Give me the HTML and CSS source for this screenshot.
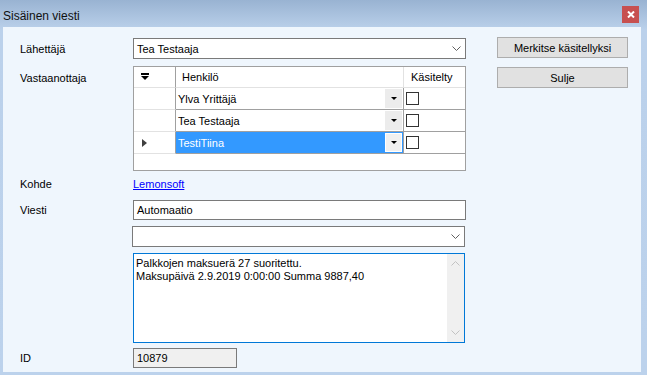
FILE: index.html
```html
<!DOCTYPE html>
<html lang="fi">
<head>
    <meta charset="UTF-8">
    <title>Sisäinen viesti</title>
    <link rel="stylesheet" href="styles.css">
</head>
<body>

<div class="window">
    <!-- Otsikkorivi -->
    <div class="titlebar">
        <span class="title">Sisäinen viesti</span>
        <button class="close">
            <svg width="8" height="7" viewBox="0 0 8 7"><path d="M1 0.5 L7 6.5 M7 0.5 L1 6.5" stroke="#fff" stroke-width="2"/></svg>
        </button>
    </div>

    <div class="client">
        <div class="form">
            <div class="row row-sender">
                <span class="lbl">Lähettäjä</span>
                <div class="combo">
                    <span>Tea Testaaja</span>
                    <svg class="chev" width="9" height="5" viewBox="0 0 9 5"><polyline points="0.5,0.5 4.5,4.5 8.5,0.5" fill="none" stroke="#606060"/></svg>
                </div>
            </div>

            <div class="row row-grid">
                <span class="lbl lbl-top">Vastaanottaja</span>
                <div class="dgrid">
                    <div class="dg-row dg-head">
                        <div class="rh">
                            <svg width="10" height="8" viewBox="0 0 10 8"><rect x="1" y="0" width="8" height="2" fill="#000"/><polygon points="1,3 9,3 5,7" fill="#000"/></svg>
                        </div>
                        <div class="c-name">Henkilö</div>
                        <div class="c-done">Käsitelty</div>
                    </div>
                    <div class="dg-row">
                        <div class="rh"></div>
                        <div class="c-name"><span>Ylva Yrittäjä</span><span class="dd"><i></i></span></div>
                        <div class="c-done"><span class="chk"></span></div>
                    </div>
                    <div class="dg-row">
                        <div class="rh"></div>
                        <div class="c-name"><span>Tea Testaaja</span><span class="dd"><i></i></span></div>
                        <div class="c-done"><span class="chk"></span></div>
                    </div>
                    <div class="dg-row current">
                        <div class="rh"><i class="arrow"></i></div>
                        <div class="c-name selected"><span>TestiTiina</span><span class="dd"><i></i></span></div>
                        <div class="c-done"><span class="chk"></span></div>
                    </div>
                </div>
            </div>

            <div class="row row-target">
                <span class="lbl">Kohde</span>
                <a class="link" href="#">Lemonsoft</a>
            </div>

            <div class="row row-msg">
                <span class="lbl">Viesti</span>
                <div class="textbox">Automaatio</div>
            </div>

            <div class="row row-combo2">
                <span class="lbl"></span>
                <div class="combo">
                    <span></span>
                    <svg class="chev" width="9" height="5" viewBox="0 0 9 5"><polyline points="0.5,0.5 4.5,4.5 8.5,0.5" fill="none" stroke="#606060"/></svg>
                </div>
            </div>

            <div class="row row-memo">
                <span class="lbl"></span>
                <div class="memo">
                    <div class="memo-text">Palkkojen maksuerä 27 suoritettu.<br>Maksupäivä 2.9.2019 0:00:00 Summa 9887,40</div>
                    <div class="vscroll">
                        <svg width="9" height="5" viewBox="0 0 9 5"><polyline points="0.5,4.5 4.5,0.5 8.5,4.5" fill="none" stroke="#c2c2c2"/></svg>
                        <svg width="9" height="5" viewBox="0 0 9 5"><polyline points="0.5,0.5 4.5,4.5 8.5,0.5" fill="none" stroke="#c2c2c2"/></svg>
                    </div>
                </div>
            </div>

            <div class="row row-id">
                <span class="lbl">ID</span>
                <div class="textbox readonly">10879</div>
            </div>
        </div>

        <div class="actions">
            <button class="btn">Merkitse käsitellyksi</button>
            <button class="btn">Sulje</button>
        </div>
    </div>
</div>

</body>
</html>
```

FILE: styles.css
```css
body {
    margin: 0;
    font-family: "Liberation Sans", Arial, sans-serif;
    font-size: 11px;
    color: #000;
}
.window {
    width: 647px;
    height: 375px;
    box-sizing: border-box;
    padding: 0 6px 3px 3px;
    background: linear-gradient(#99b3d2, #bbd1eb 30px, #bcd2ec);
    display: flex;
    flex-direction: column;
}
.titlebar {
    height: 27px;
    display: flex;
    align-items: center;
    position: relative;
}
.title {
    font-size: 12px;
    margin-top: 5px;
    color: #101010;
}
.close {
    position: absolute;
    right: 2px;
    top: 6px;
    width: 17px;
    height: 17px;
    border: 0;
    padding: 0;
    background-color: #c75050;
    display: flex;
    align-items: center;
    justify-content: center;
}
.client {
    flex: 1;
    background-color: #eff6fd;
    display: flex;
    align-items: flex-start;
    padding: 10px 0 0 17px;
}
.form {
    padding-top: 1px;
}
.row {
    display: flex;
    align-items: center;
}
.lbl {
    width: 113px;
    flex-shrink: 0;
}
.lbl-top {
    align-self: flex-start;
    margin-top: 6px;
}
.combo, .textbox {
    width: 333px;
    height: 21px;
    box-sizing: border-box;
    border: 1px solid #7a7a7a;
    background-color: #fff;
    display: flex;
    align-items: center;
    padding-left: 3px;
}
.chev {
    margin-left: auto;
    margin-right: 4px;
}
.row-grid {
    margin-top: 7px;
    align-items: flex-start;
}
.dgrid {
    width: 333px;
    height: 105px;
    box-sizing: border-box;
    border: 1px solid #a0a0a0;
    background-color: #fff;
}
.dg-row {
    display: flex;
    height: 22px;
}
.dg-row > div {
    box-sizing: border-box;
    border-bottom: 1px solid #a0a0a0;
    display: flex;
    align-items: center;
}
.dg-head {
    height: 21px;
}
.dg-head > div {
    border-bottom: 1px solid #e2e2e2;
}
.rh {
    width: 42px;
    border-right: 1px solid #a0a0a0;
    padding-left: 6px;
}
.dg-row > .rh {
    border-bottom-color: #e2e2e2;
}
.c-name {
    width: 228px;
    border-right: 1px solid #a0a0a0;
    padding-left: 2px;
}
.dg-head .c-name {
    padding-left: 6px;
    border-right-color: #e2e2e2;
}
.c-done {
    width: 61px;
    padding-left: 2px;
}
.dg-head .c-done {
    padding-left: 7px;
}
.selected {
    background-color: #3399ff;
    color: #fff;
}
.dd {
    margin-left: auto;
    margin-right: 1px;
    width: 17px;
    height: 19px;
    background-color: #ececec;
    display: flex;
    align-items: center;
    justify-content: center;
}
.selected .dd {
    background-color: #f0f0f0;
    border: 1px solid #fff;
    box-sizing: border-box;
}
.dd i {
    width: 0;
    height: 0;
    border-left: 3px solid transparent;
    border-right: 3px solid transparent;
    border-top: 3px solid #000;
}
.chk {
    width: 13px;
    height: 13px;
    box-sizing: border-box;
    border: 1px solid #333;
    background-color: #fff;
}
.arrow {
    margin-left: 2px;
    width: 0;
    height: 0;
    border-top: 4px solid transparent;
    border-bottom: 4px solid transparent;
    border-left: 5px solid #404040;
}
.row-target {
    margin-top: 5px;
    height: 16px;
}
.link {
    color: #0000ff;
    text-decoration: underline;
}
.row-msg {
    margin-top: 8px;
}
.row-msg .textbox {
    height: 20px;
}
.row-combo2 {
    margin-top: 6px;
}
.row-combo2 .combo {
    margin-left: -1px;
}
.row-memo {
    margin-top: 6px;
}
.memo {
    width: 332px;
    height: 90px;
    box-sizing: border-box;
    border: 1px solid #0078d7;
    background-color: #fff;
    display: flex;
}
.memo-text {
    flex: 1;
    padding: 3px 0 0 2px;
    line-height: 13px;
}
.vscroll {
    width: 17px;
    background-color: #f0f0f0;
    display: flex;
    flex-direction: column;
    align-items: center;
    justify-content: space-between;
    padding: 7px 0 7px;
}
.row-id {
    margin-top: 5px;
}
.textbox.readonly {
    width: 104px;
    height: 20px;
    background-color: #f0f0f0;
}
.actions {
    margin-left: 31px;
    display: flex;
    flex-direction: column;
    gap: 9px;
}
.btn {
    width: 131px;
    height: 21px;
    border: 1px solid #adadad;
    background-color: #e1e1e1;
    font-family: "Liberation Sans", Arial, sans-serif;
    font-size: 11px;
    color: #000;
    padding: 0;
}
```
